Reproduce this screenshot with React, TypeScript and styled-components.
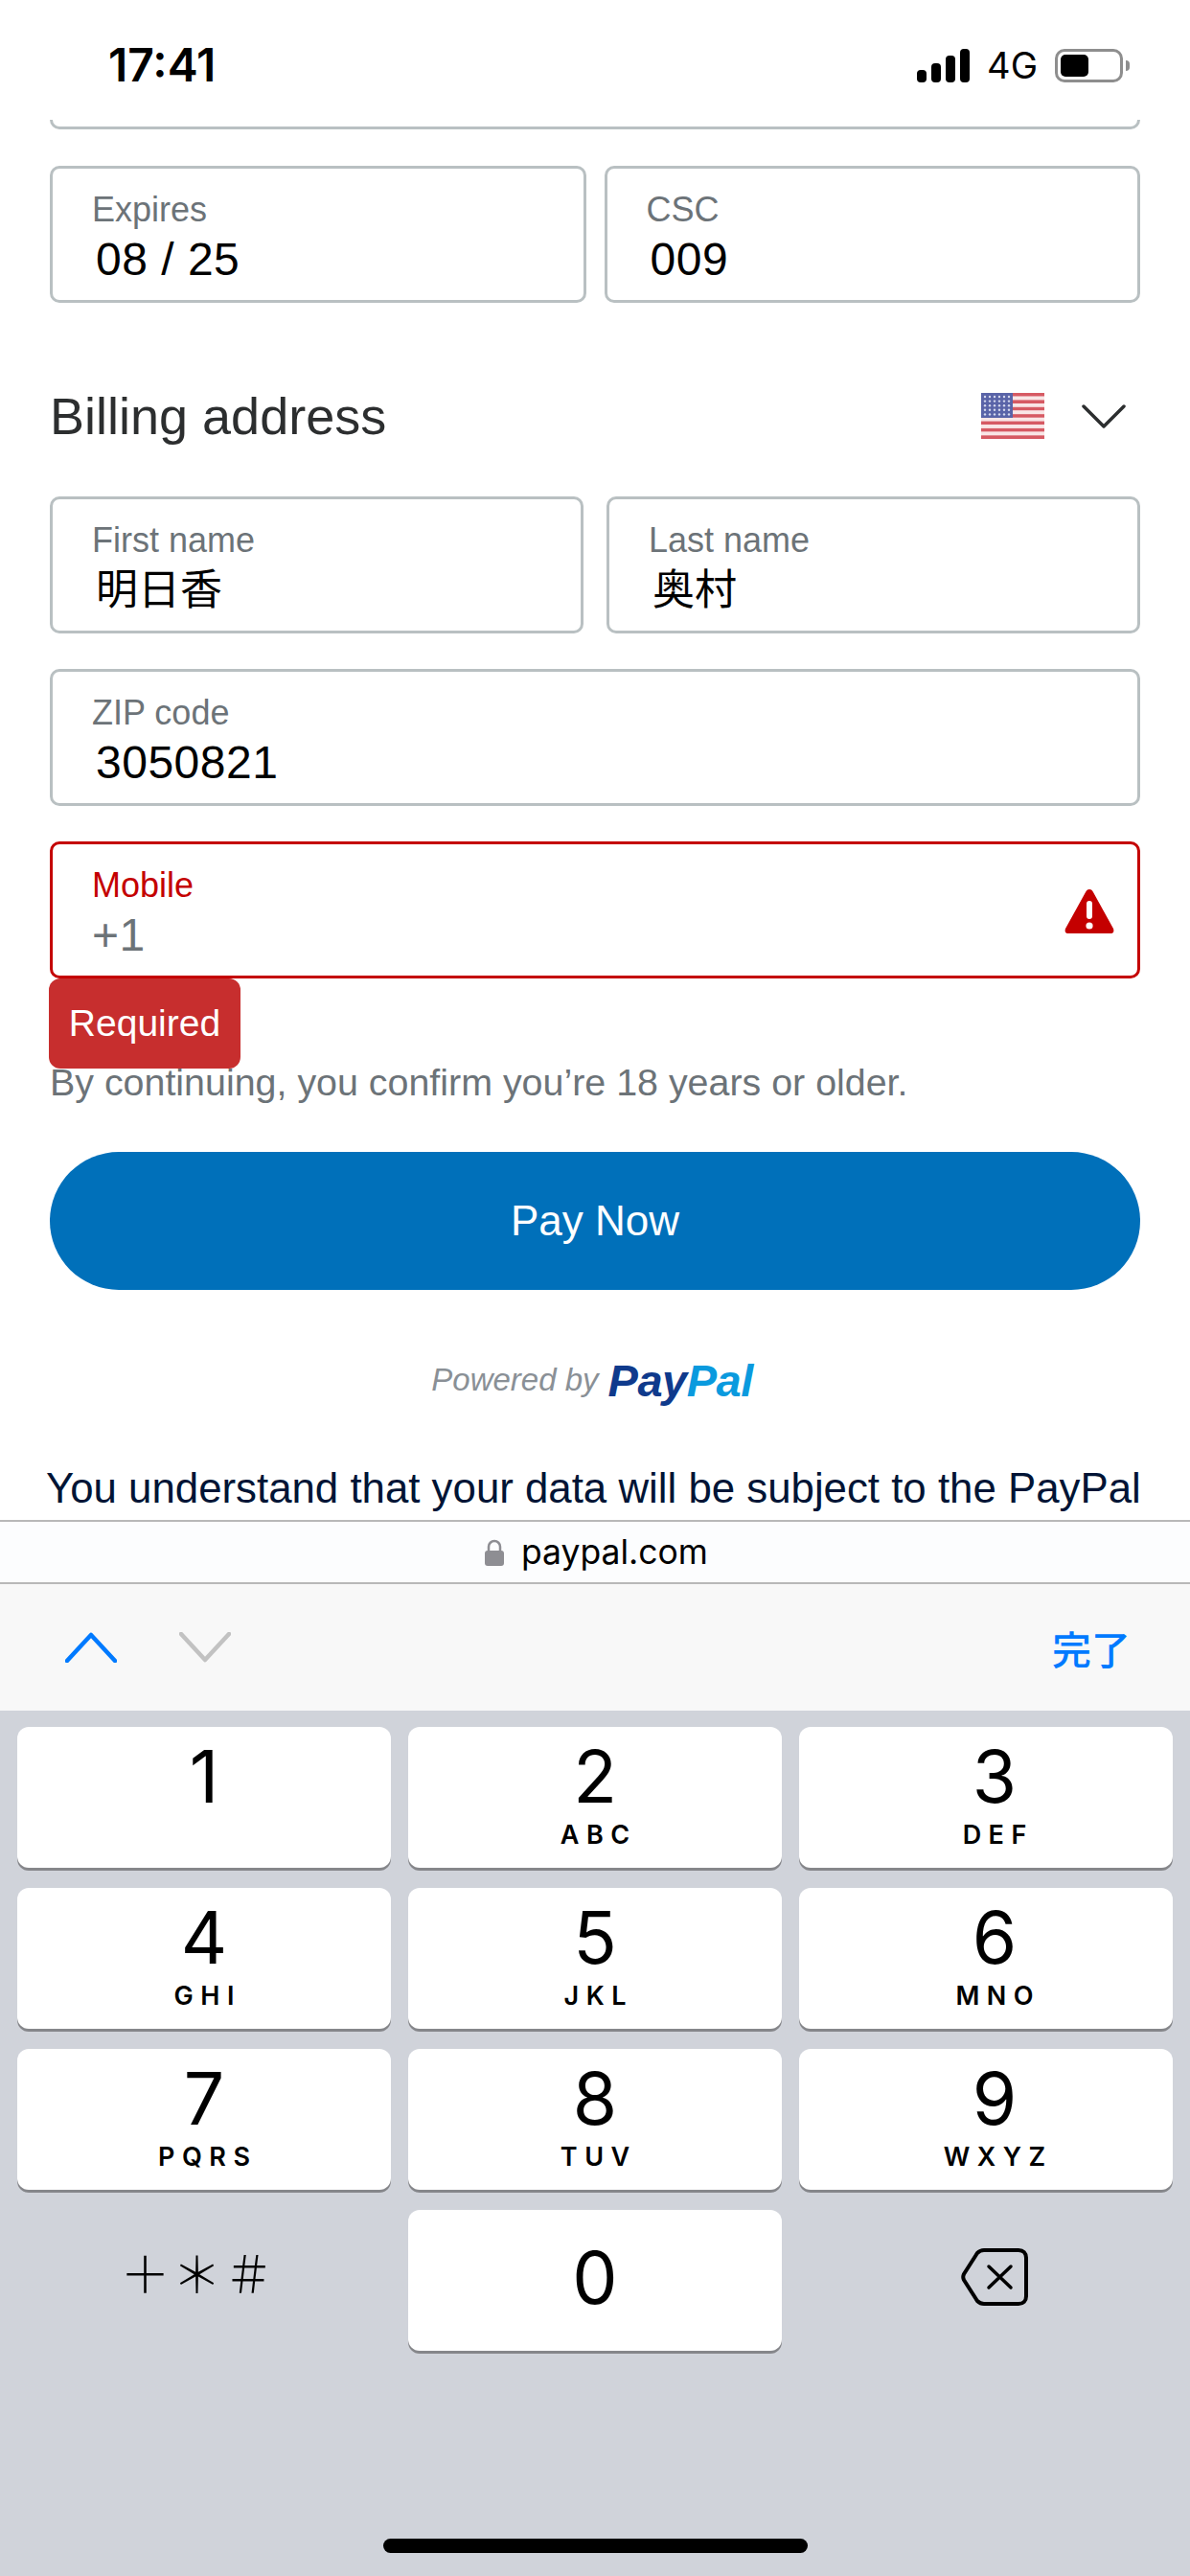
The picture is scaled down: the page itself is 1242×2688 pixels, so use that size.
import { FC } from "react";
import styled, { createGlobalStyle } from "styled-components";

const sans = `"Liberation Sans", Arial, "Noto Sans CJK JP", sans-serif`;
const ui = `Inter, "Noto Sans CJK JP", sans-serif`;

const red = "#c40000";
const gray = "#6c7378";
const line = "#b9c0c2";
const blue = "#007aff";

const GlobalStyle = createGlobalStyle`
  html, body {
    margin: 0;
    padding: 0;
    background: #fff;
  }
`;

const Phone = styled.div`
  width: 1242px;
  height: 2688px;
  overflow: hidden;
  display: flex;
  flex-direction: column;
  background: #fff;
  font-family: ${sans};
`;

const WebView = styled.div`
  height: 1586px;
  flex: none;
  overflow: hidden;
`;

const StatusBar = styled.div`
  height: 125px;
  padding: 0 70px 0 113px;
  display: flex;
  align-items: flex-start;
  justify-content: space-between;
  box-sizing: border-box;
`;

const Time = styled.span`
  margin-top: 41px;
  font: 600 48px/54px ${ui};
  color: #000;
`;

const StatusIcons = styled.div`
  margin-top: 50px;
  display: flex;
  align-items: center;
  height: 36px;
`;

const Signal = styled.div`
  display: flex;
  align-items: flex-end;
  gap: 5px;
  height: 35px;
`;

const SignalBar = styled.i<{ $h: number }>`
  display: block;
  width: 10px;
  height: ${(p) => p.$h}px;
  border-radius: 4px;
  background: #000;
`;

const Network = styled.span`
  margin: 0 18px;
  font: 400 38px/36px ${ui};
  color: #000;
`;

const Battery = styled.div`
  position: relative;
  width: 71px;
  height: 35px;
  box-sizing: border-box;
  border: 3px solid #8e8e8e;
  border-radius: 10px;
  padding: 3px;
  &::after {
    content: "";
    position: absolute;
    right: -10px;
    top: 9px;
    width: 4px;
    height: 11px;
    background: #8e8e8e;
    border-radius: 0 4px 4px 0;
  }
`;

const BatteryFill = styled.div`
  width: 29px;
  height: 100%;
  border-radius: 5px;
  background: #000;
`;

const Form = styled.div`
  padding: 0 52px;
  display: flex;
  flex-direction: column;
`;

const CutField = styled.div`
  height: 10px;
  box-sizing: border-box;
  border: 3px solid ${line};
  border-top: 0;
  border-radius: 0 0 10px 10px;
`;

const Row = styled.div<{ $gap?: number; $top?: number }>`
  display: flex;
  gap: ${(p) => p.$gap ?? 19}px;
  margin-top: ${(p) => p.$top ?? 37}px;
`;

const FieldBox = styled.div<{ $error?: boolean }>`
  position: relative;
  flex: 1;
  height: 143px;
  box-sizing: border-box;
  padding: 21px 0 0 41px;
  border: 3px solid ${(p) => (p.$error ? red : line)};
  border-radius: 10px;
`;

const Label = styled.div<{ $error?: boolean }>`
  font-size: 36px;
  line-height: 44px;
  color: ${(p) => (p.$error ? red : gray)};
`;

const Value = styled.div<{ $muted?: boolean; $cjk?: boolean }>`
  margin: 3px 0 0 ${(p) => (p.$muted ? 0 : 4)}px;
  font-size: ${(p) => (p.$cjk ? 44 : 48)}px;
  line-height: 54px;
  letter-spacing: ${(p) => (p.$cjk ? 0 : 0.5)}px;
  color: ${(p) => (p.$muted ? gray : "#000")};
`;

const AlertIcon = styled.svg`
  position: absolute;
  right: 23px;
  top: 45px;
`;

const Tooltip = styled.div`
  position: absolute;
  left: -4px;
  top: 140px;
  width: 200px;
  height: 94px;
  display: flex;
  align-items: center;
  justify-content: center;
  border-radius: 12px;
  background: #c72e2e;
  color: #fff;
  font-size: 39px;
  z-index: 2;
`;

const SectionHead = styled.div`
  margin-top: 33px;
  height: 169px;
  display: flex;
  align-items: center;
  justify-content: space-between;
  padding-right: 15px;
`;

const SectionTitle = styled.h2`
  margin: 0;
  font-size: 54px;
  font-weight: 400;
  color: #2c2e2f;
`;

const CountryPick = styled.div`
  display: flex;
  align-items: center;
  gap: 39px;
`;

const FlagArt = styled.svg`
  filter: blur(0.7px);
`;

const Notice = styled.p`
  margin: 86px 0 0;
  font-size: 39.4px;
  line-height: 44px;
  color: ${gray};
`;

const PayButton = styled.div`
  margin-top: 51px;
  height: 144px;
  border-radius: 72px;
  background: #0070ba;
  color: #fff;
  display: flex;
  align-items: center;
  justify-content: center;
  font-size: 44px;
`;

const PoweredBy = styled.div`
  margin-top: 66px;
  height: 56px;
  padding-right: 6px;
  display: flex;
  align-items: center;
  justify-content: center;
  gap: 10px;
  font-size: 33px;
  font-style: italic;
  color: #8a9096;
`;

const PayPalMark = styled.span`
  font-size: 47px;
  font-weight: 700;
  letter-spacing: -0.5px;
  color: #0f3a8c;
  & > b {
    color: #0a9ade;
  }
`;

const Legal = styled.p`
  margin: 60px -6px 0 -4px;
  font-size: 43.8px;
  line-height: 50px;
  white-space: nowrap;
  color: #001435;
`;

const AddressBar = styled.div`
  height: 67px;
  flex: none;
  box-sizing: border-box;
  padding-left: 3px;
  border-top: 2px solid #b8b8b8;
  border-bottom: 2px solid #b8b8b8;
  background: #fcfdfe;
  display: flex;
  align-items: center;
  justify-content: center;
  gap: 18px;
  font: 400 35.5px/40px ${ui};
  color: #000;
`;

const Accessory = styled.div`
  height: 132px;
  flex: none;
  box-sizing: border-box;
  padding: 0 62px 0 68px;
  background: #f8f8f8;
  display: flex;
  align-items: center;
  gap: 65px;
`;

const DoneLabel = styled.span`
  margin-left: auto;
  font: 500 41px/48px "Noto Sans CJK JP", sans-serif;
  color: ${blue};
`;

const Keyboard = styled.div`
  flex: 1;
  position: relative;
  background: #d0d3da;
  padding: 17px 18px 0;
`;

const KeyGrid = styled.div`
  display: grid;
  grid-template-columns: repeat(3, 390px);
  grid-auto-rows: 147px;
  column-gap: 18px;
  row-gap: 21px;
`;

const Key = styled.div<{ $plain?: boolean; $shift?: boolean }>`
  display: flex;
  flex-direction: column;
  align-items: center;
  box-sizing: border-box;
  padding-left: ${(p) => (p.$shift ? 18 : 0)}px;
  border-radius: 12px;
  background: ${(p) => (p.$plain ? "transparent" : "#fff")};
  box-shadow: ${(p) => (p.$plain ? "none" : "0 3px 0 #85868a")};
  color: #000;
`;

const Digit = styled.span<{ $center?: boolean }>`
  margin-top: ${(p) => (p.$center ? 26 : 7)}px;
  font: 400 75px/90px ${ui};
`;

const Letters = styled.span`
  font: 600 27px/32px ${ui};
  letter-spacing: 7.5px;
  margin-right: -7.5px;
`;

const Symbols = styled.span`
  margin: 20px 0 0 -13px;
  font: 300 52px/90px "Noto Sans CJK JP", sans-serif;
  letter-spacing: 2px;
`;

const BackspaceIcon = styled.svg`
  margin: 40px 0 0 18px;
`;

const HomeBar = styled.div`
  position: absolute;
  left: 400px;
  top: 864px;
  width: 443px;
  height: 15px;
  border-radius: 8px;
  background: #000;
`;

const Chevron: FC<{ up?: boolean; color: string }> = ({ up, color }) => (
  <svg width="54" height="32" viewBox="0 0 54 32" fill="none">
    <path
      d={up ? "M2 30 L27 3 L52 30" : "M2 2 L27 29 L52 2"}
      stroke={color}
      strokeWidth="4.5"
      strokeLinecap="round"
      strokeLinejoin="round"
    />
  </svg>
);

const Flag: FC = () => {
  const stripes = Array.from({ length: 13 }, (_, i) => i);
  const stars = Array.from({ length: 30 }, (_, i) => i);
  return (
    <FlagArt width="66" height="48" viewBox="0 0 66 48">
      {stripes.map((i) => (
        <rect
          key={i}
          x="0"
          y={(i * 48) / 13}
          width="66"
          height={48 / 13}
          fill={i % 2 === 0 ? "#d65a63" : "#f9e6e6"}
        />
      ))}
      <rect x="0" y="0" width="33" height="26" fill="#5a64a8" />
      {stars.map((i) => (
        <circle
          key={i}
          cx={4 + (i % 6) * 5}
          cy={4 + Math.floor(i / 6) * 4.6}
          r="1.2"
          fill="#d5d9ee"
        />
      ))}
    </FlagArt>
  );
};

const keys = [
  { d: "1", l: "" },
  { d: "2", l: "ABC" },
  { d: "3", l: "DEF" },
  { d: "4", l: "GHI" },
  { d: "5", l: "JKL" },
  { d: "6", l: "MNO" },
  { d: "7", l: "PQRS" },
  { d: "8", l: "TUV" },
  { d: "9", l: "WXYZ" },
];

const App: FC = () => (
  <Phone>
    <GlobalStyle />
    <WebView>
      <StatusBar>
        <Time>17:41</Time>
        <StatusIcons>
          <Signal>
            <SignalBar $h={13} />
            <SignalBar $h={20} />
            <SignalBar $h={28} />
            <SignalBar $h={35} />
          </Signal>
          <Network>4G</Network>
          <Battery>
            <BatteryFill />
          </Battery>
        </StatusIcons>
      </StatusBar>
      <Form>
        <CutField />
        <Row $top={38}>
          <FieldBox>
            <Label>Expires</Label>
            <Value>08 / 25</Value>
          </FieldBox>
          <FieldBox>
            <Label>CSC</Label>
            <Value>009</Value>
          </FieldBox>
        </Row>
        <SectionHead>
          <SectionTitle>Billing address</SectionTitle>
          <CountryPick>
            <Flag />
            <svg width="46" height="26" viewBox="0 0 46 26" fill="none">
              <path d="M2 3 L23 24 L44 3" stroke="#2c2e2f" strokeWidth="3.5" strokeLinecap="round" strokeLinejoin="round" />
            </svg>
          </CountryPick>
        </SectionHead>
        <Row $gap={24} $top={0}>
          <FieldBox>
            <Label>First name</Label>
            <Value $cjk>明日香</Value>
          </FieldBox>
          <FieldBox>
            <Label>Last name</Label>
            <Value $cjk>奥村</Value>
          </FieldBox>
        </Row>
        <Row>
          <FieldBox>
            <Label>ZIP code</Label>
            <Value>3050821</Value>
          </FieldBox>
        </Row>
        <Row>
          <FieldBox $error>
            <Label $error>Mobile</Label>
            <Value $muted>+1</Value>
            <AlertIcon width="54" height="50" viewBox="0 0 54 50">
              <path
                d="M27 2 C29 2 30 3 31 5 L52 43 C53 46 52 48 49 48 L5 48 C2 48 1 46 2 43 L23 5 C24 3 25 2 27 2 Z"
                fill="#c40000"
              />
              <rect x="24" y="14" width="6" height="19" rx="3" fill="#fff" />
              <circle cx="27" cy="40" r="3.6" fill="#fff" />
            </AlertIcon>
            <Tooltip>Required</Tooltip>
          </FieldBox>
        </Row>
        <Notice>By continuing, you confirm you’re 18 years or older.</Notice>
        <PayButton>Pay Now</PayButton>
        <PoweredBy>
          Powered by
          <PayPalMark>
            Pay<b>Pal</b>
          </PayPalMark>
        </PoweredBy>
        <Legal>You understand that your data will be subject to the PayPal</Legal>
      </Form>
    </WebView>
    <AddressBar>
      <svg width="20" height="28" viewBox="0 0 20 28">
        <path d="M4 13 V8 a6 6 0 0 1 12 0 V13" fill="none" stroke="#8e8e93" strokeWidth="2.5" />
        <rect x="0" y="12" width="20" height="16" rx="3" fill="#8e8e93" />
      </svg>
      paypal.com
    </AddressBar>
    <Accessory>
      <Chevron up color={blue} />
      <Chevron color="#c2c2c2" />
      <DoneLabel>完了</DoneLabel>
    </Accessory>
    <Keyboard>
      <KeyGrid>
        {keys.map((k, i) => (
          <Key key={k.d} $shift={i % 3 === 2}>
            <Digit>{k.d}</Digit>
            {k.l && <Letters>{k.l}</Letters>}
          </Key>
        ))}
        <Key $plain>
          <Symbols>＋＊＃</Symbols>
        </Key>
        <Key>
          <Digit $center>0</Digit>
        </Key>
        <Key $plain>
          <BackspaceIcon width="70" height="60" viewBox="0 0 70 60" fill="none">
            <path
              d="M24 2 H60 C65 2 68 5 68 10 V50 C68 55 65 58 60 58 H24 C21 58 19 57 17 55 L3 33 C2 31 2 29 3 27 L17 5 C19 3 21 2 24 2 Z"
              stroke="#000"
              strokeWidth="4"
            />
            <path d="M29 19 L52 41 M52 19 L29 41" stroke="#000" strokeWidth="3.5" strokeLinecap="round" />
          </BackspaceIcon>
        </Key>
      </KeyGrid>
      <HomeBar />
    </Keyboard>
  </Phone>
);

export default App;
